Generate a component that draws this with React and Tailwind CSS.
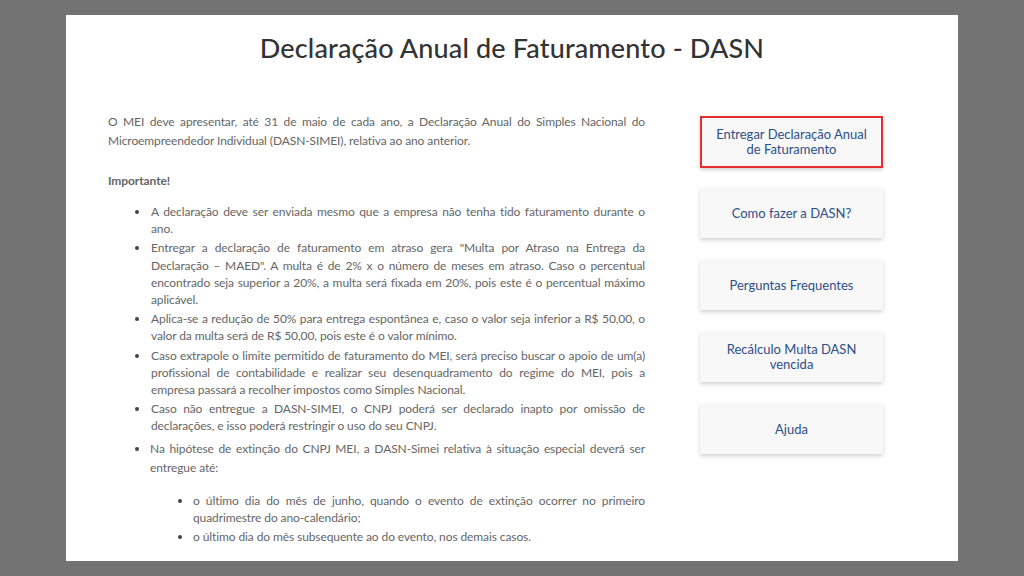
import React from 'react';

const links = [
  { label: 'Entregar Declaração Anual de Faturamento', active: true },
  { label: 'Como fazer a DASN?' },
  { label: 'Perguntas Frequentes' },
  { label: 'Recálculo Multa DASN vencida' },
  { label: 'Ajuda' },
];

const items = [
  'A declaração deve ser enviada mesmo que a empresa não tenha tido faturamento durante o ano.',
  'Entregar a declaração de faturamento em atraso gera "Multa por Atraso na Entrega da Declaração – MAED". A multa é de 2% x o número de meses em atraso. Caso o percentual encontrado seja superior a 20%, a multa será fixada em 20%, pois este é o percentual máximo aplicável.',
  'Aplica-se a redução de 50% para entrega espontânea e, caso o valor seja inferior a R$ 50,00, o valor da multa será de R$ 50,00, pois este é o valor mínimo.',
  'Caso extrapole o limite permitido de faturamento do MEI, será preciso buscar o apoio de um(a) profissional de contabilidade e realizar seu desenquadramento do regime do MEI, pois a empresa passará a recolher impostos como Simples Nacional.',
  'Caso não entregue a DASN-SIMEI, o CNPJ poderá ser declarado inapto por omissão de declarações, e isso poderá restringir o uso do seu CNPJ.',
];

export default function App() {
  return (
    <div className="w-[1024px] h-[576px] overflow-hidden bg-[#737373] pt-[15px] pl-[66px] font-['Lato',sans-serif]">
      <div className="w-[892px] h-[546px] bg-white overflow-hidden px-[42px] pt-[17px]">
        <h1 className="text-center text-[27px] leading-[32px] tracking-[0.15px] text-[#333] font-medium">
          Declaração Anual de Faturamento - DASN
        </h1>

        <div className="flex mt-[48px]">
          {/* texto principal */}
          <div className="w-[537px] text-[12px] tracking-[-0.1px] text-[#666] text-justify">
            <p className="leading-[19px]">
              O MEI deve apresentar, até 31 de maio de cada ano, a Declaração Anual do Simples Nacional do
              Microempreendedor Individual (DASN-SIMEI), relativa ao ano anterior.
            </p>
            <p className="font-bold mt-[21px] leading-[19px]">Importante!</p>

            <ul className="mt-[13px] pl-[42px] list-disc marker:text-[#444] leading-[17.2px] space-y-[2px]">
              {items.map((t, i) => (
                <li key={i} className="pl-[1px]">{t}</li>
              ))}
              <li className="leading-[19px] pt-[2px]">
                Na hipótese de extinção do CNPJ MEI, a DASN-Simei relativa à situação especial deverá ser entregue até:
                <ul className="list-disc pl-[43px] mt-[15px] leading-[17px] space-y-[2px]">
                  <li>o último dia do mês de junho, quando o evento de extinção ocorrer no primeiro quadrimestre do ano-calendário;</li>
                  <li>o último dia do mês subsequente ao do evento, nos demais casos.</li>
                </ul>
              </li>
            </ul>
          </div>

          {/* atalhos */}
          <div className="ml-[55px] mt-[4px] w-[183px] flex flex-col gap-[22px]">
            {links.map((l) => (
              <a
                key={l.label}
                href="#"
                className={`flex items-center justify-center text-center px-[6px] bg-[#f8f8f8] shadow-[0_2px_4px_rgba(0,0,0,0.18)] text-[#2d4f88] text-[13px] leading-[15px] ${
                  l.active ? 'h-[52px] -mb-[2px] border-2 border-[#e62e2e]' : 'h-[50px]'
                }`}
              >
                {l.label}
              </a>
            ))}
          </div>
        </div>
      </div>
    </div>
  );
}
